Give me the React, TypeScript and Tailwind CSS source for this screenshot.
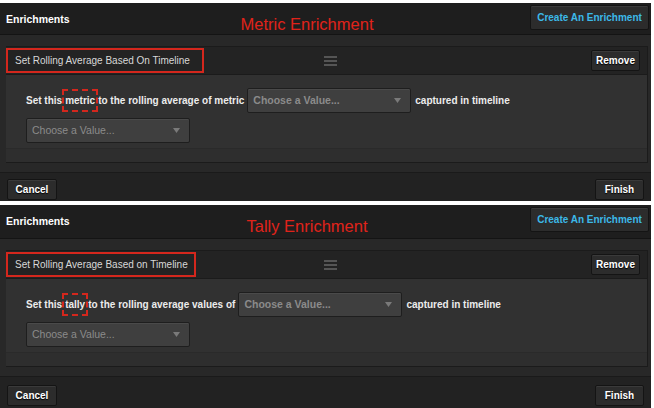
const font = { fontFamily: '"Liberation Sans", Arial, sans-serif' };

function Btn({ children, className = '' }: { children: React.ReactNode; className?: string }) {
  return (
    <div
      className={`flex items-center justify-center rounded-[2px] border border-[#141414] bg-[#2c2c2c] text-[10px] font-bold text-white shadow-[inset_0_1px_0_#3a3a3a] [text-shadow:0_1px_1px_#000] ${className}`}
    >
      {children}
    </div>
  );
}

function Select({ className = '' }: { className?: string }) {
  return (
    <div
      className={`flex h-[25px] w-[164px] items-center justify-between rounded-[2px] border border-[#1e1e1e] bg-[#3f3f3f] pl-[5px] pr-[9px] shadow-[inset_0_1px_0_#4a4a4a] ${className}`}
    >
      <span className="text-[10.5px] text-[#8b8b8b]">Choose a Value...</span>
      <svg width="7" height="5" viewBox="0 0 7 5">
        <path d="M0 0h7L3.5 5z" fill="#7a7a7a" />
      </svg>
    </div>
  );
}

type PanelProps = {
  title: string;
  cardTitle: string;
  boxW: string;
  word: string;
  lead: string;
  headerH: string;
  footerH: string;
};

function Panel({ title, cardTitle, boxW, word, lead, headerH, footerH }: PanelProps) {
  return (
    <div className="w-[651px] bg-[#282828]">
      <div className={`flex ${headerH} items-start border-b border-[#141414] bg-[#1e1e1e] pl-[6px] pr-[2px]`}>
        <div className="w-[78px] pt-[9px] text-[10.5px] font-bold text-white">Enrichments</div>
        <div className="flex-1 pt-[9px] text-center text-[16.5px] text-[#e0231a]">{title}</div>
        <Btn className="mt-[2px] h-[25px] w-[119px] [text-shadow:none]">
          <span className="text-[#3cb9e8]">Create An Enrichment</span>
        </Btn>
      </div>

      <div className="mx-[6px] mt-[11px] mr-[3px] border border-[#1b1b1b] border-l-0">
        <div className="grid h-[27px] grid-cols-[1fr_auto_1fr] items-center bg-[#232323]">
          <div
            className={`flex h-[25px] ${boxW} items-center border-2 border-[#d4271d] pl-[7px] text-[10px] text-[#d8d8d8]`}
          >
            {cardTitle}
          </div>
          <div className="ml-[7px] flex flex-col gap-[2px]">
            <div className="h-[2px] w-[13px] bg-[#555]" />
            <div className="h-[2px] w-[13px] bg-[#555]" />
            <div className="h-[2px] w-[13px] bg-[#555]" />
          </div>
          <div className="flex justify-end pr-[7px]">
            <Btn className="h-[21px] w-[49px] text-[10.5px]">Remove</Btn>
          </div>
        </div>
        <div className="border-t border-[#1b1b1b] bg-[#313131]">
          <div className="pl-[20px] pt-[13px]">
            <div className="flex h-[25px] items-center text-[10px] font-bold text-[#ececec]">
              <span>Set this</span>
              <span className="relative px-[3px]">
                {word}
                <span className="absolute -top-[4px] -bottom-[4px] left-0 right-0 border-2 border-dashed border-[#d4271d]" />
              </span>
              <span className="mr-[3px]">{lead}</span>
              <Select />
              <span className="ml-[4px]">captured in timeline</span>
            </div>
            <Select className="mt-[5px]" />
          </div>
          <div className="mt-[5px] h-[14px] border-t border-[#2a2a2a] bg-[#2e2e2e]" />
        </div>
      </div>

      <div className={`mt-[9px] flex ${footerH} items-start justify-between border-t border-[#1a1a1a] bg-[#222] px-[7px]`}>
        <Btn className="h-[21px] w-[50px]">Cancel</Btn>
        <Btn className="h-[21px] w-[49px]">Finish</Btn>
      </div>
    </div>
  );
}

export default function App() {
  return (
    <div className="h-[408px] w-[654px] overflow-hidden bg-white pt-[3px]" style={font}>
      <Panel
        title="Metric Enrichment"
        cardTitle="Set Rolling Average Based On Timeline"
        boxW="w-[198px]"
        word="metric"
        lead="to the rolling average of metric"
        headerH="h-[32px]"
        footerH="h-[29px] pt-[6px]"
      />
      <div className="h-[4px]" />
      <Panel
        title="Tally Enrichment"
        cardTitle="Set Rolling Average Based on Timeline"
        boxW="w-[190px]"
        word="tally"
        lead="to the rolling average values of"
        headerH="h-[34px]"
        footerH="h-[32px] pt-[8px]"
      />
    </div>
  );
}
